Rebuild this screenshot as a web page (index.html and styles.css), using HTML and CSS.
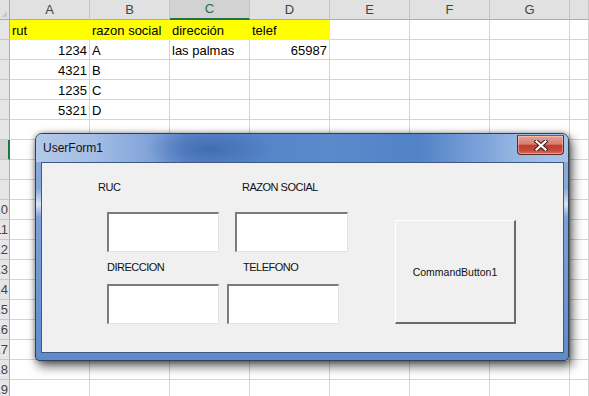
FILE: index.html
```html
<!DOCTYPE html>
<html lang="es">
<head>
  <meta charset="UTF-8">
  <meta name="viewport" content="width=device-width, initial-scale=1.0">
  <title>UserForm1</title>
  <link rel="stylesheet" href="styles.css">
</head>
<body>
  <table class="sheet">
    <colgroup>
      <col class="col-rowhead">
      <col class="col-cell"><col class="col-cell"><col class="col-cell"><col class="col-cell">
      <col class="col-cell"><col class="col-cell"><col class="col-cell">
      <col class="col-tail">
    </colgroup>
    <thead>
      <tr>
        <th class="corner"></th>
        <th>A</th><th>B</th><th class="is-active">C</th><th>D</th><th>E</th><th>F</th><th>G</th><th></th>
      </tr>
    </thead>
    <tbody>
      <tr><th></th><td class="fill">rut</td><td class="fill">razon social</td><td class="fill">dirección</td><td class="fill">telef</td><td></td><td></td><td></td><td></td></tr>
      <tr><th></th><td class="num">1234</td><td>A</td><td>las palmas</td><td class="num">65987</td><td></td><td></td><td></td><td></td></tr>
      <tr><th></th><td class="num">4321</td><td>B</td><td></td><td></td><td></td><td></td><td></td><td></td></tr>
      <tr><th></th><td class="num">1235</td><td>C</td><td></td><td></td><td></td><td></td><td></td><td></td></tr>
      <tr><th></th><td class="num">5321</td><td>D</td><td></td><td></td><td></td><td></td><td></td><td></td></tr>
      <tr><th></th><td></td><td></td><td></td><td></td><td></td><td></td><td></td><td></td></tr>
      <tr class="is-active"><th></th><td></td><td></td><td></td><td></td><td></td><td></td><td></td><td></td></tr>
      <tr><th></th><td></td><td></td><td></td><td></td><td></td><td></td><td></td><td></td></tr>
      <tr><th></th><td></td><td></td><td></td><td></td><td></td><td></td><td></td><td></td></tr>
      <tr><th>10</th><td></td><td></td><td></td><td></td><td></td><td></td><td></td><td></td></tr>
      <tr><th>11</th><td></td><td></td><td></td><td></td><td></td><td></td><td></td><td></td></tr>
      <tr><th>12</th><td></td><td></td><td></td><td></td><td></td><td></td><td></td><td></td></tr>
      <tr><th>13</th><td></td><td></td><td></td><td></td><td></td><td></td><td></td><td></td></tr>
      <tr><th>14</th><td></td><td></td><td></td><td></td><td></td><td></td><td></td><td></td></tr>
      <tr><th>15</th><td></td><td></td><td></td><td></td><td></td><td></td><td></td><td></td></tr>
      <tr><th>16</th><td></td><td></td><td></td><td></td><td></td><td></td><td></td><td></td></tr>
      <tr><th>17</th><td></td><td></td><td></td><td></td><td></td><td></td><td></td><td></td></tr>
      <tr><th>18</th><td></td><td></td><td></td><td></td><td></td><td></td><td></td><td></td></tr>
      <tr><th>19</th><td></td><td></td><td></td><td></td><td></td><td></td><td></td><td></td></tr>
    </tbody>
  </table>

  <div class="userform">
    <div class="titlebar">
      <span class="title">UserForm1</span>
      <button class="close-btn" aria-label="Cerrar">
        <svg width="14" height="11" viewBox="0 0 14 11">
          <path d="M2.5 1.5 L11.5 9.5 M11.5 1.5 L2.5 9.5" stroke="#3a1d1a" stroke-width="4.2" stroke-linecap="square"/>
          <path d="M2.5 1.5 L11.5 9.5 M11.5 1.5 L2.5 9.5" stroke="#fff" stroke-width="2.2" stroke-linecap="square"/>
        </svg>
      </button>
    </div>
    <div class="client">
      <div class="fields">
        <div class="label-row row-1">
          <span class="lbl lbl-ruc">RUC</span>
          <span class="lbl">RAZON SOCIAL</span>
        </div>
        <div class="box-row row-1">
          <input class="textbox" type="text">
          <input class="textbox wide" type="text">
        </div>
        <div class="label-row row-2">
          <span class="lbl lbl-dir">DIRECCION</span>
          <span class="lbl">TELEFONO</span>
        </div>
        <div class="box-row row-2">
          <input class="textbox" type="text">
          <input class="textbox" type="text">
        </div>
      </div>
      <button class="command-btn">CommandButton1</button>
    </div>
  </div>
</body>
</html>
```

FILE: styles.css
```css
body {
  margin: 0;
  width: 589px;
  height: 396px;
  overflow: hidden;
  position: relative;
  background: #fff;
  font-family: 'Liberation Sans', Arial, sans-serif;
}

/* spreadsheet */

.sheet {
  width: 589px;
  table-layout: fixed;
  border-collapse: separate;
  border-spacing: 0;
  font-size: 13px;
  color: #000;
}

.col-rowhead {
  width: 10px;
}

.col-cell {
  width: 80px;
}

.col-tail {
  width: 19px;
}

.sheet tr {
  height: 20px;
}

.sheet td {
  padding: 0 2px 1px;
  border-right: 1px solid #d4d4d4;
  border-bottom: 1px solid #d4d4d4;
  line-height: 15px;
  vertical-align: bottom;
  white-space: nowrap;
  overflow: hidden;
}

.sheet td.num {
  text-align: right;
}

.sheet td.fill {
  background: #ffff00;
  border-color: #ffff00;
}

.sheet thead th {
  padding: 0;
  background: #e1e1e1;
  color: #444;
  font-weight: normal;
  border-right: 1px solid #c4c4c4;
  border-bottom: 1px solid #ababab;
  line-height: 19px;
  vertical-align: middle;
}

.sheet thead th.corner {
  background: #e1e1e1 linear-gradient(135deg, transparent 55%, #c8c8c8 55%) no-repeat right 2px bottom 2px / 6px 6px;
  border-right-color: #ababab;
}

.sheet thead th.is-active {
  background: #d2d2d2;
  color: #217346;
  border-bottom: 2px solid #217346;
  line-height: 18px;
}

.sheet tbody th {
  padding: 0 2px 2px 0;
  background: #e6e6e6;
  color: #444;
  font-weight: normal;
  border-right: 1px solid #ababab;
  border-bottom: 1px solid #c8c8c8;
  direction: rtl;
  text-align: right;
  white-space: nowrap;
  overflow: hidden;
  line-height: 15px;
  vertical-align: bottom;
}

.sheet tbody tr.is-active th {
  background: #d2d2d2;
  border-right: 2px solid #217346;
}

/* user form window */

.userform {
  position: absolute;
  left: 35px;
  top: 133px;
  width: 534px;
  height: 228px;
  box-sizing: border-box;
  display: flex;
  flex-direction: column;
  padding: 0 4px 7px 5px;
  border: 1px solid #33404f;
  border-radius: 7px 7px 4px 4px;
  background: linear-gradient(180deg, #8cacdc 0%, #86a8da 24%, #d7e3f4 31%, #7ca1d8 37%, #5f8bcb 100%);
  box-shadow: 3px 5px 11px rgba(0, 0, 0, 0.65), 0 0 5px rgba(0, 0, 0, 0.35);
}

.titlebar {
  height: 28px;
  margin: 0 -4px 0 -5px;
  padding: 0 4px 0 7px;
  display: flex;
  align-items: flex-start;
  border-radius: 6px 6px 0 0;
  background:
    radial-gradient(ellipse 62px 22px at 173px 15px, rgba(40, 80, 150, 0.5), rgba(40, 80, 150, 0) 100%),
    linear-gradient(90deg, #b3c9e9 0%, #a3bde4 11%, #86a7da 20%, #5e8acb 28%, #5584c8 42%, #5b8acb 55%, #5282c7 72%, #7ea3da 84%, #9dbae4 92%, #a9c3e8 100%);
}

.title {
  margin-top: 7px;
  font-size: 12px;
  line-height: 15px;
  color: #111;
}

.close-btn {
  margin: 1px 0 0 auto;
  width: 47px;
  height: 20px;
  padding: 0;
  border: 1px solid #5a2a24;
  border-top-color: #8d4c45;
  border-radius: 0 0 4px 4px;
  background: linear-gradient(180deg, #e5a196 0%, #d77d71 45%, #c0402f 52%, #c7493a 80%, #d8705f 100%);
  box-shadow: inset 0 0 0 1px rgba(255, 220, 210, 0.45);
  display: flex;
  align-items: center;
  justify-content: center;
}

.client {
  flex: 1;
  display: flex;
  align-items: flex-start;
  background: #f0f0f0;
  border: 1px solid #3f5a82;
}

.fields {
  width: 353px;
  flex: none;
}

.label-row {
  display: flex;
  height: 13px;
  font-size: 11px;
  line-height: 13px;
  letter-spacing: -0.5px;
  color: #111;
}

.label-row.row-1 {
  margin-top: 18px;
  padding-left: 56px;
}

.label-row.row-2 {
  margin-top: 9px;
  padding-left: 65px;
}

.lbl-ruc {
  width: 144px;
}

.lbl-dir {
  width: 136px;
}

.box-row {
  display: flex;
  padding-left: 65px;
}

.box-row.row-1 {
  margin-top: 18px;
  gap: 16px;
}

.box-row.row-2 {
  margin-top: 10px;
  gap: 8px;
}

.textbox {
  width: 112px;
  height: 40px;
  box-sizing: border-box;
  margin: 0;
  padding: 0;
  background: #fff;
  border-style: solid;
  border-width: 2px 1px 1px 2px;
  border-color: #7b7b7b #e3e3e3 #e3e3e3 #7b7b7b;
}

.textbox.wide {
  width: 113px;
}

.command-btn {
  margin: 57px 0 0 0;
  width: 121px;
  height: 104px;
  box-sizing: border-box;
  padding: 0;
  background: #f0f0f0;
  border-style: solid;
  border-width: 1px 2px 2px 1px;
  border-color: #fff #6b6b6b #6b6b6b #fff;
  font-family: 'Liberation Sans', Arial, sans-serif;
  font-size: 10.5px;
  color: #111;
}
```
